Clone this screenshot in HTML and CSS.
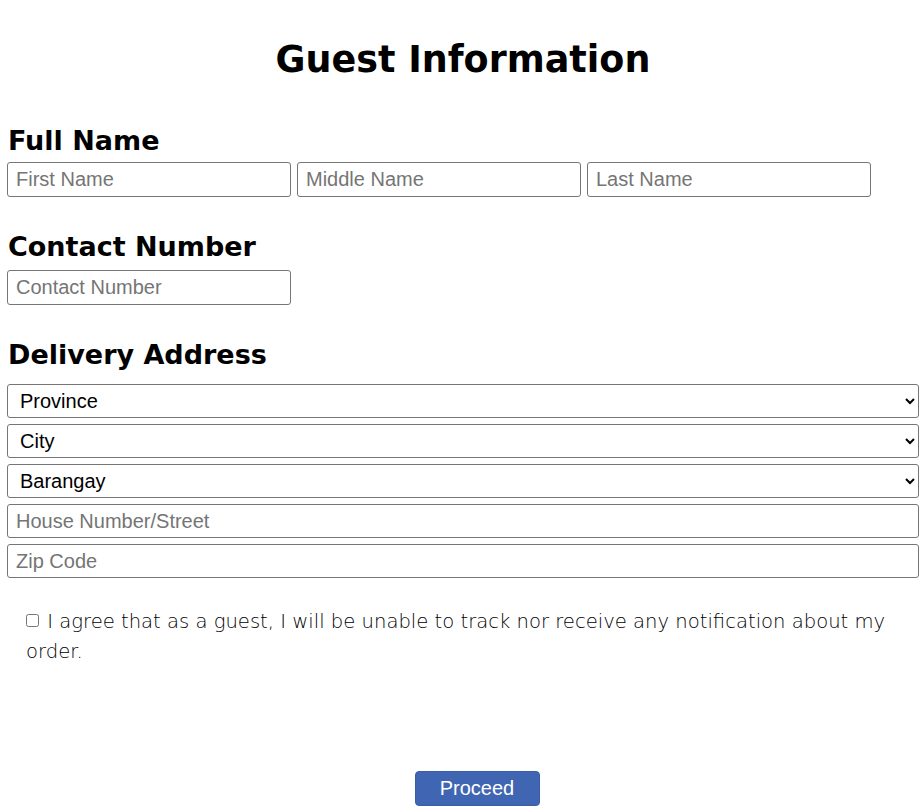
FILE: index.html
```html
<!DOCTYPE html>
<html lang="en">
<head>
<meta charset="utf-8">
<title>Guest Information</title>
<link rel="stylesheet" href="styles.css">
</head>
<body>
<main class="page">
  <h1 class="title">Guest Information</h1>

  <section class="group">
    <h2 class="label label-name">Full Name</h2>
    <div class="name-row">
      <input class="field field-short" type="text" placeholder="First Name">
      <input class="field field-short" type="text" placeholder="Middle Name">
      <input class="field field-short" type="text" placeholder="Last Name">
    </div>
  </section>

  <section class="group">
    <h2 class="label label-contact">Contact Number</h2>
    <input class="field field-short" type="text" placeholder="Contact Number">
  </section>

  <section class="group">
    <h2 class="label label-address">Delivery Address</h2>
    <div class="address-list">
      <select class="field field-wide select"><option>Province</option></select>
      <select class="field field-wide select"><option>City</option></select>
      <select class="field field-wide select"><option>Barangay</option></select>
      <input class="field field-wide" type="text" placeholder="House Number/Street">
      <input class="field field-wide" type="text" placeholder="Zip Code">
    </div>
  </section>

  <p class="agree">
    <input class="check" type="checkbox"> I agree that as a guest, I will be unable to track nor receive any notification about my order.
  </p>

  <div class="actions">
    <button class="proceed" type="button">Proceed</button>
  </div>
</main>
</body>
</html>
```

FILE: styles.css
```css
html, body {
  margin: 0;
  padding: 0;
  background: #ffffff;
}

.page {
  padding: 0 4px 0 7px;
  font-family: "Liberation Sans", Arial, sans-serif;
  color: #000;
}

.title {
  margin: 38px 0 0 0;
  font-family: "DejaVu Sans", sans-serif;
  font-weight: 700;
  font-size: 36.5px;
  line-height: 44px;
  text-align: center;
  letter-spacing: 0;
}

.label {
  margin: 0;
  padding-left: 1px;
  font-family: "DejaVu Sans", sans-serif;
  font-weight: 700;
  font-size: 27px;
  line-height: 34px;
}

.label-name {
  margin-top: 42px;
  margin-bottom: 4px;
}

.label-contact {
  margin-top: 33px;
  margin-bottom: 6px;
}

.label-address {
  margin-top: 33px;
  margin-bottom: 12px;
}

.name-row {
  display: flex;
  gap: 6px;
}

.field {
  box-sizing: border-box;
  margin: 0;
  border: 1px solid #767676;
  border-radius: 3px;
  font-family: "Liberation Sans", Arial, sans-serif;
  font-size: 20px;
  color: #000;
  background: #fff;
  display: block;
}

.field::placeholder {
  color: #757575;
}

input.field {
  padding: 0 8px;
}

.field-short {
  width: 284px;
  height: 35px;
}

.address-list {
  display: flex;
  flex-direction: column;
  gap: 6px;
}

.field-wide {
  width: 912px;
  height: 34px;
}

.select {
  padding: 0 4px 0 8px;
}

.agree {
  margin: 29px 0 0 0;
  padding: 0 20px 0 19px;
  font-family: "DejaVu Sans", sans-serif;
  font-weight: 200;
  font-size: 19.6px;
  line-height: 30px;
  color: #000;
}

.check {
  margin: 0 2px 0 0;
  width: 13px;
  height: 13px;
  vertical-align: 1px;
}

.actions {
  display: flex;
  justify-content: center;
  padding-left: 28px;
  margin-top: 104px;
}

.proceed {
  width: 125px;
  height: 35px;
  border: 1px solid #3a5ea6;
  border-radius: 4px;
  background: #4066b3;
  color: #fff;
  font-family: "Liberation Sans", Arial, sans-serif;
  font-size: 20px;
  padding: 0;
}
```
